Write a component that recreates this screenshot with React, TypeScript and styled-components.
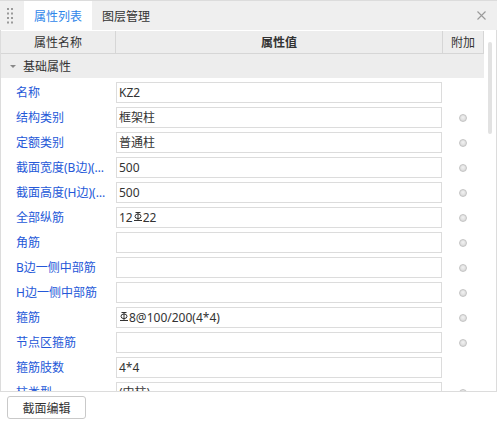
import React from 'react';
import styled, { createGlobalStyle } from 'styled-components';

const Global = createGlobalStyle`
  html, body { margin: 0; padding: 0; background: #fff; }
  body {
    font-family: "Noto Sans", "Noto Sans CJK SC", sans-serif;
    font-size: 12px;
    color: #333;
  }
`;

const Root = styled.div`
  width: 497px;
  height: 422px;
  display: flex;
  flex-direction: column;
  background: #fff;
  overflow: hidden;
`;

const TabBar = styled.div`
  height: 30px;
  box-sizing: border-box;
  border-top: 1px solid #dcdcdc;
  background: #efefef;
  display: flex;
  align-items: stretch;
  flex-shrink: 0;
`;

const Grip = styled.div`
  width: 24px;
  display: flex;
  align-items: center;
  justify-content: center;
  padding-right: 4px;
  box-sizing: border-box;
`;

const Tab = styled.div<{ $active?: boolean }>`
  padding: 0 10px;
  display: flex;
  align-items: center;
  background: ${(p) => (p.$active ? '#fff' : 'transparent')};
  color: ${(p) => (p.$active ? '#2f86ea' : '#333')};
  font-size: 12px;
`;

const Close = styled.div`
  margin-left: auto;
  margin-right: 11px;
  display: flex;
  align-items: center;
`;

const Panel = styled.div`
  height: 362px;
  box-sizing: border-box;
  border: 1px solid #dcdcdc;
  border-top: none;
  display: flex;
  overflow: hidden;
  flex-shrink: 0;
`;

const Table = styled.div`
  width: 483px;
  display: flex;
  flex-direction: column;
  flex-shrink: 0;
`;

const Gutter = styled.div`
  flex: 1;
  padding-left: 4px;
`;

const Thumb = styled.div`
  width: 4px;
  height: 92px;
  margin-top: 12px;
  border-radius: 2px;
  background: #e2e2e2;
`;

const HeaderRow = styled.div`
  display: grid;
  grid-template-columns: 115px 327px 41px;
  height: 24px;
  box-sizing: border-box;
  border-top: 1px solid #fff;
  border-bottom: 1px solid #d6d6d6;
  background: #ededed;
  flex-shrink: 0;
`;

const HeaderCell = styled.div<{ $bold?: boolean }>`
  border-right: 1px solid #d6d6d6;
  display: flex;
  align-items: center;
  justify-content: center;
  font-weight: ${(p) => (p.$bold ? 700 : 400)};
  color: #333;
`;

const GroupRow = styled.div`
  height: 24px;
  background: #ededed;
  display: flex;
  align-items: center;
  padding-left: 9px;
  gap: 7px;
  flex-shrink: 0;
  color: #333;
`;

const Caret = styled.span`
  width: 0;
  height: 0;
  border-left: 3px solid transparent;
  border-right: 3px solid transparent;
  border-top: 3px solid #888;
`;

const Row = styled.div`
  display: grid;
  grid-template-columns: 115px 326px 1fr;
  height: 25px;
  padding-top: 4px;
  box-sizing: border-box;
  flex-shrink: 0;
`;

const Label = styled.div`
  height: 21px;
  line-height: 21px;
  padding: 0 8px 0 15px;
  color: #2458d8;
  white-space: nowrap;
  overflow: hidden;
  text-overflow: ellipsis;
`;

const ValueBox = styled.div`
  height: 21px;
  box-sizing: border-box;
  border: 1px solid #dcdcdc;
  background: #fff;
  padding-left: 2px;
  line-height: 19px;
  color: #333;
  white-space: nowrap;
  overflow: hidden;
  display: flex;
  align-items: center;
`;

const DotCell = styled.div`
  height: 21px;
  display: flex;
  align-items: center;
  justify-content: center;
`;

const Dot = styled.span`
  width: 8px;
  height: 8px;
  box-sizing: border-box;
  border-radius: 50%;
  border: 1px solid #c4c4c4;
  background: radial-gradient(circle at 50% 40%, #f2f2f2, #d2d2d2);
`;

const Footer = styled.div`
  flex: 1;
  padding: 4px 0 0 7px;
`;

const Button = styled.button`
  width: 79px;
  height: 23px;
  box-sizing: border-box;
  border: 1px solid #c9c9c9;
  border-radius: 3px;
  background: #fff;
  font-family: inherit;
  font-size: 12px;
  color: #333;
  padding: 0;
`;

const SymWrap = styled.span`
  display: inline-flex;
  margin: 0 1px;
  transform: translateY(-1px);
`;

const Rebar = () => (
  <SymWrap>
    <svg width="8" height="9" viewBox="0 0 8 9">
      <g stroke="#333" strokeWidth="1" fill="none">
        <line x1="1.5" y1="0.5" x2="6.5" y2="0.5" />
        <line x1="4" y1="0" x2="4" y2="8.5" />
        <ellipse cx="4" cy="4.3" rx="3" ry="2.3" />
        <line x1="0" y1="8.5" x2="8" y2="8.5" />
      </g>
    </svg>
  </SymWrap>
);

type RowData = { label: string; value: React.ReactNode; dot: boolean };

const rows: RowData[] = [
  { label: '名称', value: 'KZ2', dot: false },
  { label: '结构类别', value: '框架柱', dot: true },
  { label: '定额类别', value: '普通柱', dot: true },
  { label: '截面宽度(B边)(mm)', value: '500', dot: true },
  { label: '截面高度(H边)(mm)', value: '500', dot: true },
  { label: '全部纵筋', value: <>12<Rebar />22</>, dot: true },
  { label: '角筋', value: '', dot: true },
  { label: 'B边一侧中部筋', value: '', dot: true },
  { label: 'H边一侧中部筋', value: '', dot: true },
  { label: '箍筋', value: <><Rebar />8@100/200(4*4)</>, dot: true },
  { label: '节点区箍筋', value: '', dot: true },
  { label: '箍筋肢数', value: '4*4', dot: false },
  { label: '柱类型', value: '(中柱)', dot: true },
  { label: '材质', value: '商品混凝土', dot: true },
];

export default function App() {
  return (
    <Root>
      <Global />
      <TabBar>
        <Grip>
          <svg width="6" height="16" viewBox="0 0 6 16">
            {[0, 1, 2, 3].map((r) =>
              [0, 1].map((c) => (
                <rect key={`${r}-${c}`} x={c * 4} y={r * 4.5} width="2" height="2" fill="#9a9a9a" />
              ))
            )}
          </svg>
        </Grip>
        <Tab $active>属性列表</Tab>
        <Tab>图层管理</Tab>
        <Close>
          <svg width="9" height="9" viewBox="0 0 9 9">
            <path d="M0.5 0.5 L8.5 8.5 M8.5 0.5 L0.5 8.5" stroke="#9a9a9a" strokeWidth="1.1" />
          </svg>
        </Close>
      </TabBar>
      <Panel>
        <Table>
          <HeaderRow>
            <HeaderCell>属性名称</HeaderCell>
            <HeaderCell $bold>属性值</HeaderCell>
            <HeaderCell>附加</HeaderCell>
          </HeaderRow>
          <GroupRow>
            <Caret />
            <span>基础属性</span>
          </GroupRow>
          {rows.map((r, i) => (
            <Row key={i}>
              <Label>{r.label}</Label>
              <ValueBox>{r.value}</ValueBox>
              <DotCell>{r.dot && <Dot />}</DotCell>
            </Row>
          ))}
        </Table>
        <Gutter>
          <Thumb />
        </Gutter>
      </Panel>
      <Footer>
        <Button>截面编辑</Button>
      </Footer>
    </Root>
  );
}
